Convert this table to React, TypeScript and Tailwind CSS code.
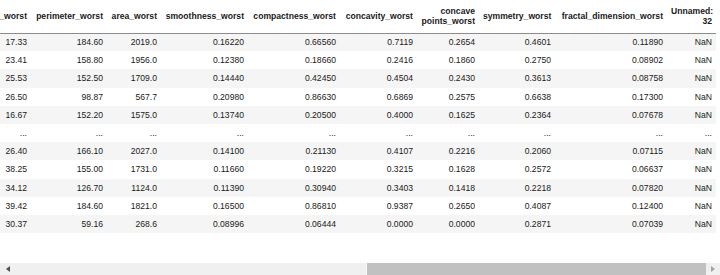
const columns = [
  { key: "texture_worst", label: ["texture_worst"], width: 65 },
  { key: "perimeter_worst", label: ["perimeter_worst"], width: 76 },
  { key: "area_worst", label: ["area_worst"], width: 54 },
  { key: "smoothness_worst", label: ["smoothness_worst"], width: 87 },
  { key: "compactness_worst", label: ["compactness_worst"], width: 92 },
  { key: "concavity_worst", label: ["concavity_worst"], width: 77 },
  { key: "concave_points_worst", label: ["concave", "points_worst"], width: 62 },
  { key: "symmetry_worst", label: ["symmetry_worst"], width: 76 },
  { key: "fractal_dimension_worst", label: ["fractal_dimension_worst"], width: 112 },
  { key: "unnamed", label: ["Unnamed:", "32"], width: 49 },
];

// rows as shown in the notebook (head + tail, "..." in the middle)
const rows: string[][] = [
  ["17.33", "184.60", "2019.0", "0.16220", "0.66560", "0.7119", "0.2654", "0.4601", "0.11890", "NaN"],
  ["23.41", "158.80", "1956.0", "0.12380", "0.18660", "0.2416", "0.1860", "0.2750", "0.08902", "NaN"],
  ["25.53", "152.50", "1709.0", "0.14440", "0.42450", "0.4504", "0.2430", "0.3613", "0.08758", "NaN"],
  ["26.50", "98.87", "567.7", "0.20980", "0.86630", "0.6869", "0.2575", "0.6638", "0.17300", "NaN"],
  ["16.67", "152.20", "1575.0", "0.13740", "0.20500", "0.4000", "0.1625", "0.2364", "0.07678", "NaN"],
  ["...", "...", "...", "...", "...", "...", "...", "...", "...", "..."],
  ["26.40", "166.10", "2027.0", "0.14100", "0.21130", "0.4107", "0.2216", "0.2060", "0.07115", "NaN"],
  ["38.25", "155.00", "1731.0", "0.11660", "0.19220", "0.3215", "0.1628", "0.2572", "0.06637", "NaN"],
  ["34.12", "126.70", "1124.0", "0.11390", "0.30940", "0.3403", "0.1418", "0.2218", "0.07820", "NaN"],
  ["39.42", "184.60", "1821.0", "0.16500", "0.86810", "0.9387", "0.2650", "0.4087", "0.12400", "NaN"],
  ["30.37", "59.16", "268.6", "0.08996", "0.06444", "0.0000", "0.0000", "0.2871", "0.07039", "NaN"],
];

export default function App() {
  return (
    <div
      className="w-[720px] h-[275px] bg-white flex flex-col text-[#1a1a1a] overflow-hidden"
      style={{ fontFamily: '"Liberation Sans", Arial, sans-serif' }}
    >
      {/* Table, scrolled to the right */}
      <div className="h-[263px] overflow-hidden">
        <table className="table-fixed border-collapse ml-[-34px] w-[750px] text-[8.6px]">
          <colgroup>
            {columns.map((c) => (
              <col key={c.key} style={{ width: c.width }} />
            ))}
          </colgroup>
          <thead>
            <tr className="border-b border-[#8c8c8c]">
              {columns.map((c) => (
                <th
                  key={c.key}
                  className="h-[33px] px-[4px] py-0 text-right align-middle font-bold leading-[10px] whitespace-nowrap"
                >
                  {c.label.map((l) => (
                    <div key={l}>{l}</div>
                  ))}
                </th>
              ))}
            </tr>
          </thead>
          <tbody>
            {rows.map((r, i) => (
              <tr key={i} className={i % 2 === 0 ? "bg-[#f5f5f5]" : "bg-white"}>
                {r.map((v, j) => (
                  <td
                    key={j}
                    className="h-[18.2px] px-[4px] py-0 text-right align-middle leading-[10px] whitespace-nowrap"
                  >
                    {v}
                  </td>
                ))}
              </tr>
            ))}
          </tbody>
        </table>
      </div>

      {/* Horizontal scrollbar */}
      <div className="h-[12px] flex bg-[#f0f0f0]">
        <div className="w-[16px] flex items-center justify-center">
          <svg width="4" height="6" viewBox="0 0 4 6">
            <path d="M4 0 L0 3 L4 6 Z" fill="#505050" />
          </svg>
        </div>
        <div className="flex-1 flex">
          <div className="ml-[350px] w-[340px] bg-[#c1c1c1] border-l border-[#f7f7f7]" />
        </div>
        <div className="w-[14px] flex items-center justify-center">
          <svg width="4" height="6" viewBox="0 0 4 6">
            <path d="M0 0 L4 3 L0 6 Z" fill="#a3a3a3" />
          </svg>
        </div>
      </div>
    </div>
  );
}
